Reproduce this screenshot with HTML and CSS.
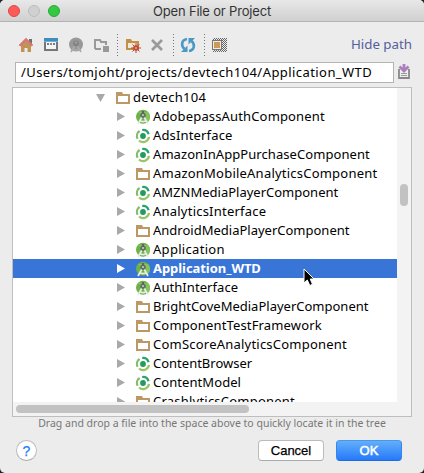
FILE: index.html
```html
<!DOCTYPE html>
<html lang="en">
<head>
<meta charset="utf-8">
<title>Open File or Project</title>
<link rel="stylesheet" href="styles.css">
</head>
<body>
<svg class="defs" aria-hidden="true">
  <defs>
    <symbol id="folder" viewBox="0 0 16 16"><path fill="#bd9764" fill-rule="evenodd" d="M1 2h6l1 2h7v10H1zM3 6v6h10V6z"/></symbol>
    <symbol id="android" viewBox="0 0 16 16"><circle cx="8" cy="7.7" r="7" fill="#6ab344"/><path d="M3 3l10 10a7 7 0 0 0 0-10z" fill="#83c45c"/><circle cx="8" cy="6.3" r="2.8" fill="#667066"/><path d="M8 2v3" stroke="#5d665d" stroke-width="2"/><path d="M6.7 8.5L3 15M9.3 8.5L13 15M5 11.8Q8 13.4 11 11.8" stroke="#e8ebe6" stroke-width="1.8" fill="none"/><circle cx="8" cy="6" r="1" fill="#c9d0c7"/></symbol>
    <symbol id="gradle" viewBox="0 0 16 16"><circle cx="8" cy="8" r="2.9" fill="#229b5e"/><g fill="none" stroke-width="2.2"><path d="M7.2 2A6 6 0 0 1 13.6 6.2" stroke="#27a56a"/><path d="M14 8.8A6 6 0 0 1 4 12.5" stroke="#98c565"/><path d="M2.6 10.8A6 6 0 0 1 4.6 3" stroke="#80be63"/></g></symbol>
  </defs>
</svg>
<div class="window">
  <header class="titlebar">
    <div class="lights"><i class="red"></i><i class="gray"></i><i class="green"></i></div>
    <h1>Open File or Project</h1>
  </header>
  <div class="toolbar">
    <svg width="16" height="16"><path d="M11 2h3v6h-3z" fill="#6e716b"/><path d="M3 8l5-5 5 5v7H9.5v-4h-3v4H3z" fill="#c19356"/><path d="M1.5 8.8L8 2.3l6.5 6.5" fill="none" stroke="#db7474" stroke-width="2.2"/></svg>
    <svg width="16" height="16"><path d="M2 5v8h12V5" fill="#f4f4f4" stroke="#777" stroke-width="2"/><path d="M1 1h14v4H1z" fill="#408dbd"/><path d="M1 4.5h14" stroke="#72b1d5"/><path d="M4 6h2v2H4zM10 6h2v2h-2z" fill="#438eb9"/><path d="M7 6h2v2H7z" fill="#b77b3b"/></svg>
    <svg width="16" height="16"><circle cx="8" cy="7.5" r="7" fill="#999"/><path d="M7 8l-4 7M9 8l4 7M5 12q3 2 6 0" stroke="#aaa" stroke-width="1.6" fill="none"/><circle cx="8" cy="6.5" r="3" fill="#858585"/><circle cx="8" cy="5.5" r="1" fill="#aaa"/></svg>
    <svg width="16" height="16"><path d="M2 12V3h5l1 2h5v3M2 12h6" fill="none" stroke="#999" stroke-width="2"/><path d="M10 9h6v6h-6z" fill="#999"/></svg>
    <span class="sep"></span>
    <svg width="16" height="16"><path d="M1 2h5l1 2h7v9H1z" fill="#c39046"/><path d="M3 6h9v5H3z" fill="#eee9de"/><path d="M11 6v10M6 11h10M7.5 7.5l7 7M14.5 7.5l-7 7" stroke="#b8493a"/><circle cx="11" cy="11" r="2.8" fill="#bf4736"/><circle cx="11" cy="11" r="1.2" fill="#ee8b64"/></svg>
    <svg class="close" width="16" height="16"><path d="M3 3l10 10M13 3L3 13" stroke="#999" stroke-width="2.7"/></svg>
    <span class="sep"></span>
    <svg class="refresh" width="16" height="16"><g fill="none" stroke="#4c98c5" stroke-width="2.6"><path d="M7 2C1 3 1 9 4.500 12M9 14c6-1 6-7 2.500-10"/></g><path d="M1 15h6.500V8.500zM15 1H8.500v6.500z" fill="#4c98c5"/></svg>
    <span class="sep"></span>
    <svg class="hidden-files" width="16" height="16" shape-rendering="crispEdges"><defs><pattern id="check" width="2" height="2" patternUnits="userSpaceOnUse"><path d="M0 0h1v1H0zM1 1h1v1H1z" fill="#666"/></pattern></defs><path d="M2 1h14v14H2z" fill="url(#check)"/><path d="M1 3h10v10H1z" fill="#777"/><path d="M2 4h8v8H2z" fill="#f3eadd"/><path d="M3 5h6v6H3z" fill="#cc9957"/></svg>
    <a class="hide">Hide path</a>
  </div>
  <div class="pathbar">
    <div class="path"><span>/Users/tomjoht/projects/devtech104/Application_WTD</span></div>
    <svg width="14" height="18"><path d="M2 7v9h10V7" fill="#eee" stroke="#888" stroke-width="1.8"/><path d="M4 11.500h6M4 13.500h6" stroke="#999"/><path d="M7 2v6M2.500 4.500L7 9l4.500-4.500" fill="none" stroke="#aa80bc" stroke-width="2.8"/></svg>
  </div>
  <div class="tree">
    <div class="rows">
      <div class="row root wider"><svg class="arrow"><path d="M0 1h9L4.5 9z"/></svg><svg class="icon"><use href="#folder"/></svg><span>devtech104</span></div>
      <div class="row wide"><svg class="arrow"><path d="M0 0l8 4.5L0 9z"/></svg><svg class="icon"><use href="#android"/></svg><span>AdobepassAuthComponent</span></div>
      <div class="row wide"><svg class="arrow"><path d="M0 0l8 4.5L0 9z"/></svg><svg class="icon"><use href="#gradle"/></svg><span>AdsInterface</span></div>
      <div class="row snug"><svg class="arrow"><path d="M0 0l8 4.5L0 9z"/></svg><svg class="icon"><use href="#gradle"/></svg><span>AmazonInAppPurchaseComponent</span></div>
      <div class="row loose"><svg class="arrow"><path d="M0 0l8 4.5L0 9z"/></svg><svg class="icon"><use href="#folder"/></svg><span>AmazonMobileAnalyticsComponent</span></div>
      <div class="row"><svg class="arrow"><path d="M0 0l8 4.5L0 9z"/></svg><svg class="icon"><use href="#gradle"/></svg><span>AMZNMediaPlayerComponent</span></div>
      <div class="row loose"><svg class="arrow"><path d="M0 0l8 4.5L0 9z"/></svg><svg class="icon"><use href="#gradle"/></svg><span>AnalyticsInterface</span></div>
      <div class="row"><svg class="arrow"><path d="M0 0l8 4.5L0 9z"/></svg><svg class="icon"><use href="#folder"/></svg><span>AndroidMediaPlayerComponent</span></div>
      <div class="row wider"><svg class="arrow"><path d="M0 0l8 4.5L0 9z"/></svg><svg class="icon"><use href="#android"/></svg><span>Application</span></div>
      <div class="row selected"><svg class="arrow"><path d="M0 0l8 4.5L0 9z"/></svg><svg class="icon"><use href="#android"/></svg><span>Application_WTD</span></div>
      <div class="row snug"><svg class="arrow"><path d="M0 0l8 4.5L0 9z"/></svg><svg class="icon"><use href="#android"/></svg><span>AuthInterface</span></div>
      <div class="row"><svg class="arrow"><path d="M0 0l8 4.5L0 9z"/></svg><svg class="icon"><use href="#folder"/></svg><span>BrightCoveMediaPlayerComponent</span></div>
      <div class="row wide"><svg class="arrow"><path d="M0 0l8 4.5L0 9z"/></svg><svg class="icon"><use href="#folder"/></svg><span>ComponentTestFramework</span></div>
      <div class="row loose"><svg class="arrow"><path d="M0 0l8 4.5L0 9z"/></svg><svg class="icon"><use href="#folder"/></svg><span>ComScoreAnalyticsComponent</span></div>
      <div class="row"><svg class="arrow"><path d="M0 0l8 4.5L0 9z"/></svg><svg class="icon"><use href="#gradle"/></svg><span>ContentBrowser</span></div>
      <div class="row snug"><svg class="arrow"><path d="M0 0l8 4.5L0 9z"/></svg><svg class="icon"><use href="#gradle"/></svg><span>ContentModel</span></div>
      <div class="row loose"><svg class="arrow"><path d="M0 0l8 4.5L0 9z"/></svg><svg class="icon"><use href="#folder"/></svg><span>CrashlyticsComponent</span></div>
    </div>
    <div class="vscroll"><i></i></div>
    <div class="hscroll"><i></i></div>
  </div>
  <p class="hint"><span>Drag and drop a file into the space above to quickly locate it in the tree</span></p>
  <footer class="actions">
    <button class="help">?</button>
    <button class="cancel">Cancel</button>
    <button class="ok">OK</button>
  </footer>
</div>
<svg class="cursor" width="13" height="19"><path d="M1 1v14l3.3-3 2.5 5.5 2.7-1.2L7.2 11H11z" fill="#000" stroke="#fff"/></svg>
</body>
</html>
```
FILE: styles.css
```css
* { box-sizing: border-box; }
body { margin: 0; background: #202126; overflow: hidden; font-family: "Noto Sans", sans-serif; font-size: 13px; color: #000; }
.defs { position: absolute; width: 0; height: 0; }
svg { display: block; flex: none; }
.window { width: 424px; height: 473px; background: #ececec; border-radius: 5px; overflow: hidden; }
.titlebar { height: 22px; display: grid; grid-template-columns: 60px 1fr 60px; align-items: center; background: linear-gradient(#e8e8e8, #d0d0d0); border-bottom: 1px solid #b3b3b3; }
.titlebar h1 { margin: 0; text-align: center; white-space: nowrap; font: 13px/20px Inter, sans-serif; letter-spacing: -.17px; color: #333; }
.lights { display: flex; gap: 8px; padding-left: 8px; }
.lights i { width: 12px; height: 12px; border-radius: 50%; border: 1px solid; }
.lights .red { background: #fc5b57; border-color: #df4744; }
.lights .gray { background: #d0d0d0; border-color: #bcbcbc; }
.lights .green { background: #34c940; border-color: #27aa35; }
.toolbar { height: 40px; display: flex; align-items: center; gap: 9px; padding: 5px 12px 0 18px; }
.sep { width: 1px; height: 22px; margin: 0 -2px 0 -1px; background: repeating-linear-gradient(#777 0 1px, transparent 1px 3px); }
.close { margin-left: -1px; }
.refresh { margin-left: -1px; }
.hidden-files { margin-left: -1px; }
.hide { margin-left: auto; color: #53609d; font-size: 13.3px; white-space: nowrap; position: relative; top: -1px; }
.pathbar { display: flex; height: 21px; padding-left: 15px; gap: 3px; }
.path { width: 379px; height: 21px; border: 1px solid #b4b4b4; background: #fff; padding-left: 5px; line-height: 18px; white-space: nowrap; letter-spacing: .43px; }
.tree { margin: 4px 0 0 12px; width: 400px; height: 330px; border: 1px solid #bebebe; background: #fff; display: grid; grid-template: 314px 14px / 384px 14px; }
.rows { overflow: hidden; }
.row { height: 19px; display: flex; align-items: center; padding-left: 104px; white-space: nowrap; line-height: 19px; }
.snug { letter-spacing: .07px; }
.wide { letter-spacing: .15px; }
.loose { letter-spacing: .22px; }
.wider { letter-spacing: .3px; }
.arrow { width: 9px; height: 9px; margin-right: 9px; fill: #a9a9a9; }
.icon { width: 16px; height: 16px; margin-right: 2px; }
.root { padding-left: 83px; }
.root .arrow { margin-right: 10px; }
.selected { background: #3875d7; color: #fff; font-weight: bold; letter-spacing: -.06px; }
.selected .arrow { fill: #fff; }
.vscroll { background: #f3f3f3; padding: 96px 0 0 3px; }
.vscroll i { display: block; width: 8px; height: 22px; border-radius: 4px; background: #c2c2c2; }
.hscroll { grid-column: 1 / 3; background: #f3f3f3; padding: 3px; }
.hscroll i { display: block; width: 233px; height: 8px; border-radius: 4px; background: #c2c2c2; }
.hint { margin: 0; height: 23px; line-height: 13px; text-align: center; font-size: 10.5px; color: #777; white-space: nowrap; }
.actions { display: flex; align-items: center; padding: 0 22px 0 16px; height: 21px; }
button { padding: 0; height: 21px; border: 1px solid #bbb; border-bottom-color: #aaa; border-radius: 4px; background: #fff; font: 13px/18px "Liberation Sans", sans-serif; color: #000; -webkit-text-stroke: .25px; }
.help { width: 21px; border-radius: 50%; color: #267cf5; font-size: 14px; }
.cancel { width: 66px; margin-left: auto; }
.ok { width: 66px; margin-left: 12px; color: #fff; background: linear-gradient(#63aff9, #2679fb); border-color: #4598ed #3584ef #2869d8; -webkit-text-stroke: .5px; }
.cursor { position: absolute; left: 303px; top: 268px; }
```
